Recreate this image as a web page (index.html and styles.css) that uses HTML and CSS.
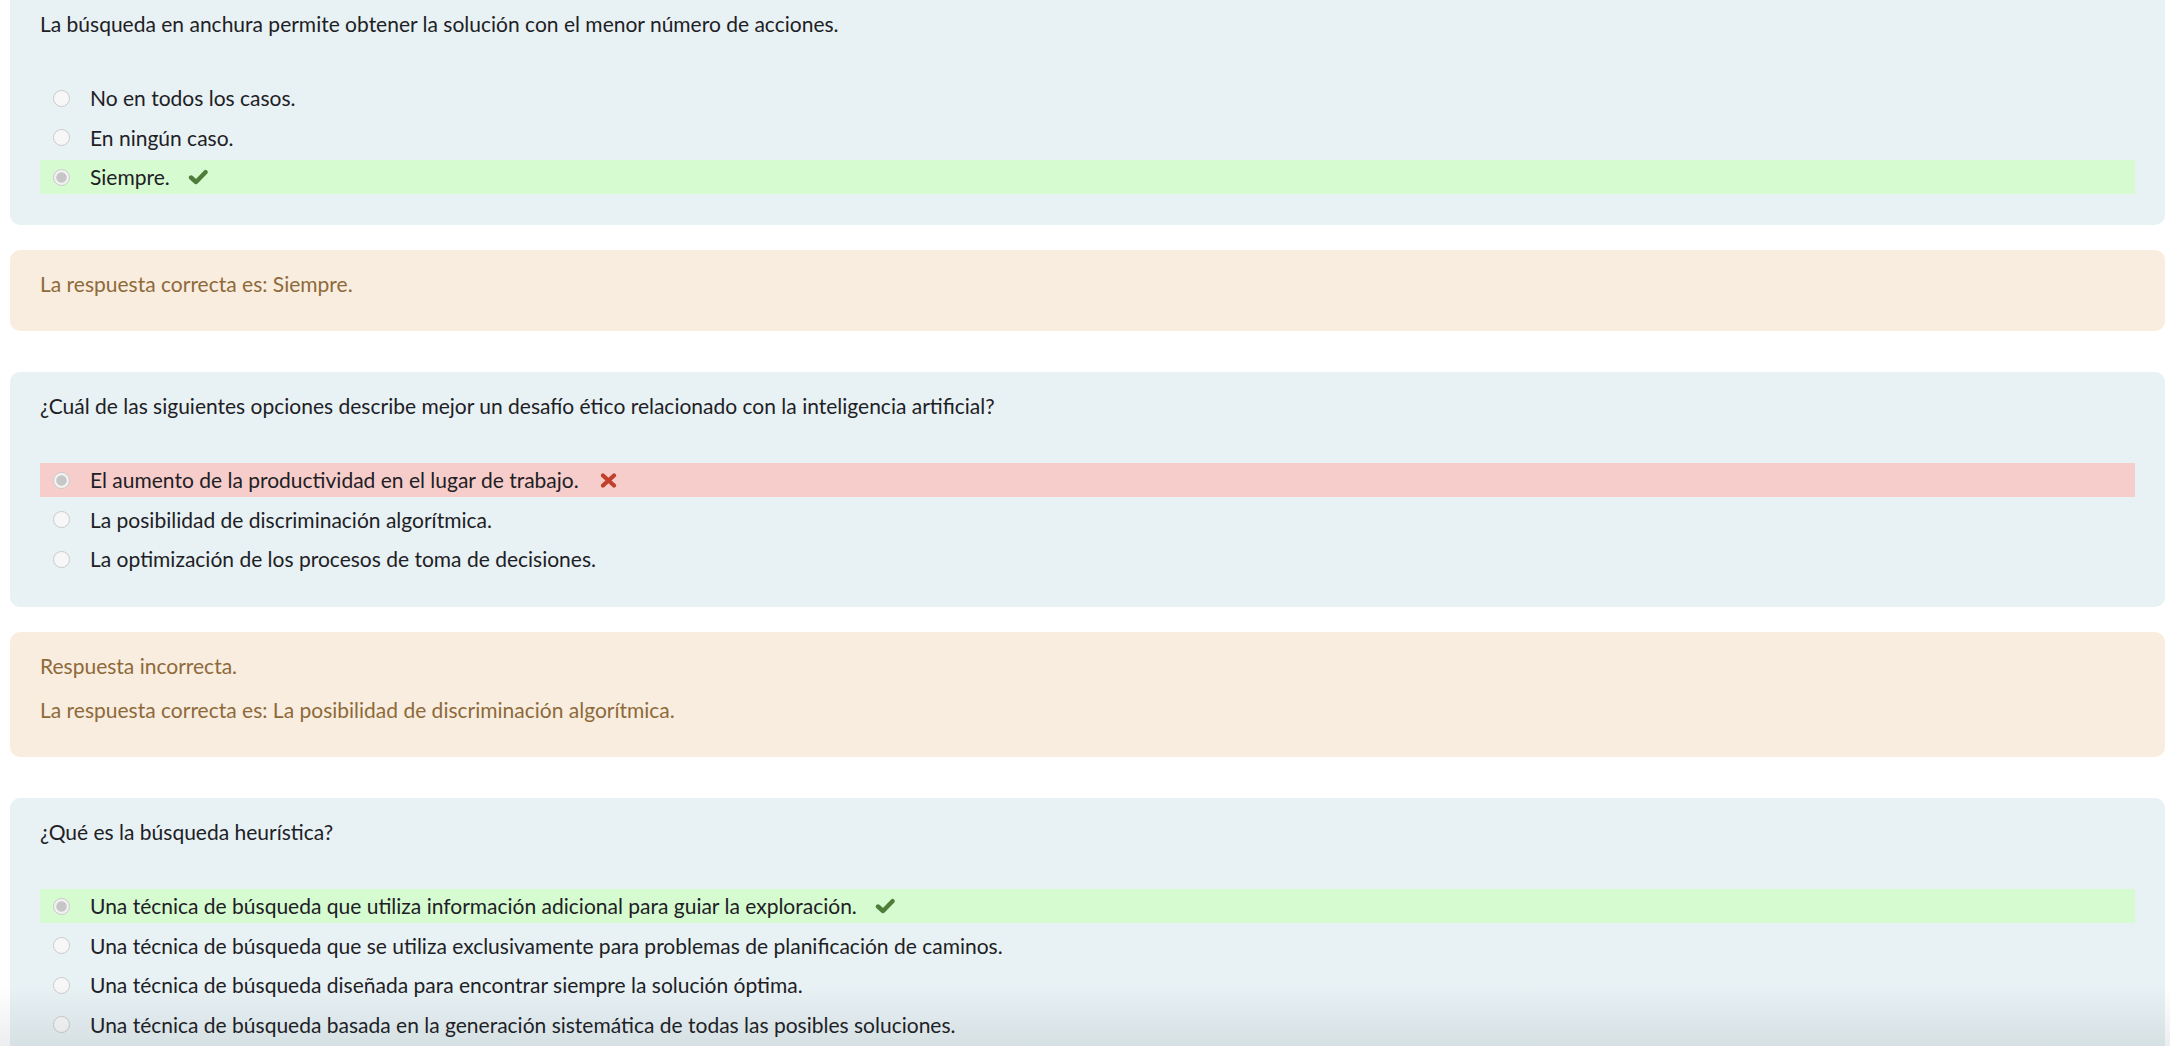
FILE: index.html
```html
<!DOCTYPE html>
<html lang="es">
<head>
<meta charset="utf-8">
<title>Revisión del cuestionario</title>
<link rel="stylesheet" href="styles.css">
</head>
<body>
<main class="page">
  <section class="formulation first">
    <p class="qtext">La búsqueda en anchura permite obtener la solución con el menor número de acciones.</p>
    <div class="answers">
      <div class="opt"><span class="radio"></span><span class="label">No en todos los casos.</span></div>
      <div class="opt"><span class="radio"></span><span class="label">En ningún caso.</span></div>
      <div class="opt correct"><span class="radio checked"></span><span class="label">Siempre.</span>
        <svg class="icon-check" viewBox="0 0 20 16" width="20" height="16"><polyline points="3,8.5 8,13 17.5,3.2" fill="none" stroke="#4e7d3a" stroke-width="4.4" stroke-linecap="round" stroke-linejoin="round"/></svg>
      </div>
    </div>
  </section>
  <section class="outcome">
    <p class="fb">La respuesta correcta es: Siempre.</p>
  </section>

  <section class="formulation">
    <p class="qtext">¿Cuál de las siguientes opciones describe mejor un desafío ético relacionado con la inteligencia artificial?</p>
    <div class="answers">
      <div class="opt incorrect"><span class="radio checked"></span><span class="label">El aumento de la productividad en el lugar de trabajo.</span>
        <svg class="icon-x" viewBox="0 0 17 15" width="17" height="15"><line x1="3" y1="2.5" x2="14" y2="12.5" stroke="#c0402c" stroke-width="4.2" stroke-linecap="round"/><line x1="14" y1="2.5" x2="3" y2="12.5" stroke="#c0402c" stroke-width="4.2" stroke-linecap="round"/></svg>
      </div>
      <div class="opt"><span class="radio"></span><span class="label">La posibilidad de discriminación algorítmica.</span></div>
      <div class="opt"><span class="radio"></span><span class="label">La optimización de los procesos de toma de decisiones.</span></div>
    </div>
  </section>
  <section class="outcome">
    <p class="fb">Respuesta incorrecta.</p>
    <p class="fb">La respuesta correcta es: La posibilidad de discriminación algorítmica.</p>
  </section>

  <section class="formulation">
    <p class="qtext">¿Qué es la búsqueda heurística?</p>
    <div class="answers">
      <div class="opt correct"><span class="radio checked"></span><span class="label">Una técnica de búsqueda que utiliza información adicional para guiar la exploración.</span>
        <svg class="icon-check" viewBox="0 0 20 16" width="20" height="16"><polyline points="3,8.5 8,13 17.5,3.2" fill="none" stroke="#4e7d3a" stroke-width="4.4" stroke-linecap="round" stroke-linejoin="round"/></svg>
      </div>
      <div class="opt"><span class="radio"></span><span class="label">Una técnica de búsqueda que se utiliza exclusivamente para problemas de planificación de caminos.</span></div>
      <div class="opt"><span class="radio"></span><span class="label">Una técnica de búsqueda diseñada para encontrar siempre la solución óptima.</span></div>
      <div class="opt"><span class="radio"></span><span class="label">Una técnica de búsqueda basada en la generación sistemática de todas las posibles soluciones.</span></div>
    </div>
  </section>
</main>
<div class="fade"></div>
</body>
</html>
```
FILE: styles.css
```css
html, body {
  margin: 0;
  padding: 0;
  background: #ffffff;
  overflow: hidden;
}

body {
  font-family: "Lato", "Noto Sans", "DejaVu Sans", sans-serif;
  font-size: 21px;
  line-height: 30px;
  color: #1d2125;
}

.page {
  padding: 0 5px 0 10px;
}

.formulation {
  background: #e8f1f4;
  border-radius: 10px;
  padding: 19px 30px 31px 30px;
  margin-bottom: 25px;
}

.formulation.first {
  margin-top: -10px;
}

.qtext {
  margin: 0 0 42px 0;
}

.answers {
  display: flex;
  flex-direction: column;
  gap: 5.5px;
}

.opt {
  display: flex;
  align-items: center;
  height: 34px;
  padding-left: 13px;
}

.opt.correct {
  background: #d7fbd0;
}

.opt.incorrect {
  background: #f7cdcb;
}

.radio {
  flex: none;
  width: 17px;
  height: 17px;
  border: 1px solid #cacaca;
  border-radius: 50%;
  background: #f7f7f7;
  margin-right: 20px;
  box-sizing: border-box;
}

.radio.checked {
  background: radial-gradient(circle, #c6c6c6 0, #c6c6c6 4.8px, #f2f2f2 5.6px);
}

.label {
  white-space: nowrap;
}

.icon-check {
  margin-left: 18px;
  flex: none;
}

.icon-x {
  margin-left: 21px;
  flex: none;
}

.outcome {
  background: #f9eddf;
  border-radius: 10px;
  padding: 19px 30px 32px 30px;
  margin-bottom: 41px;
  color: #8e6a3a;
}

.fb {
  margin: 0;
}

.fb + .fb {
  margin-top: 14px;
}

.fade {
  position: fixed;
  left: 0;
  right: 0;
  bottom: 0;
  height: 60px;
  pointer-events: none;
  background: linear-gradient(to bottom, rgba(40, 60, 70, 0) 0%, rgba(40, 60, 70, 0.09) 100%);
}
```
